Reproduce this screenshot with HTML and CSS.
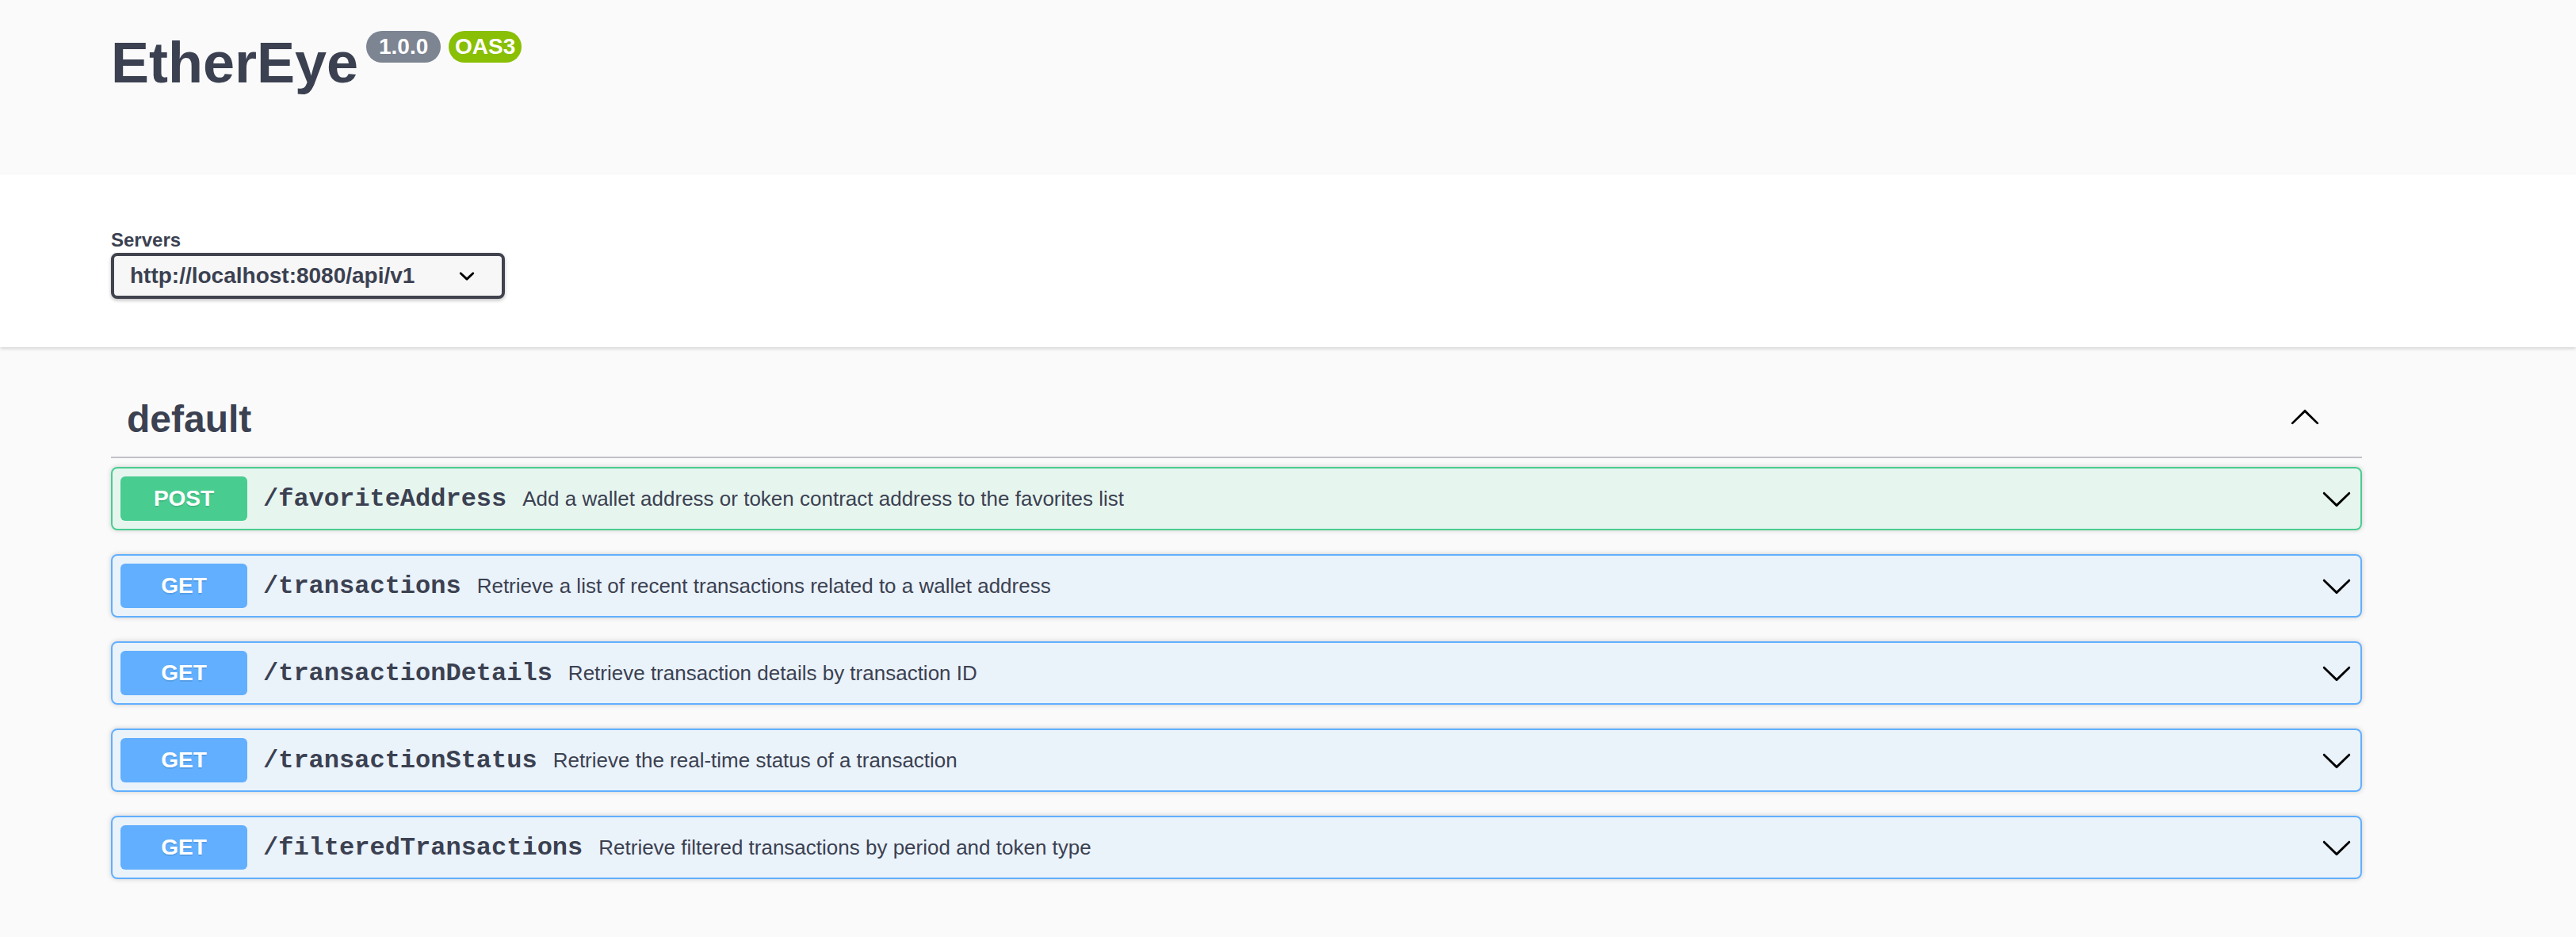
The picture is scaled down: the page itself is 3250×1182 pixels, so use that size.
FILE: index.html
```html
<!DOCTYPE html>
<html lang="en">
<head>
<meta charset="utf-8">
<title>EtherEye</title>
<link rel="stylesheet" href="styles.css">
</head>
<body>
<section class="info">
  <div class="wrapper">
    <div class="title-row">
      <h2 class="title">EtherEye</h2>
      <span class="badge badge-version">1.0.0</span>
      <span class="badge badge-oas">OAS3</span>
    </div>
  </div>
</section>

<section class="schemes">
  <div class="wrapper">
    <div class="servers-label">Servers</div>
    <div class="select">
      <span class="select-text">http://localhost:8080/api/v1</span>
      <svg class="select-arrow" viewBox="0 0 20 20" width="40" height="40"><path d="M13.418 7.859a.695.695 0 01.978 0 .68.68 0 010 .969l-3.908 3.83a.697.697 0 01-.979 0l-3.908-3.83a.68.68 0 010-.969.695.695 0 01.978 0L10 11l3.418-3.141z"/></svg>
    </div>
  </div>
</section>

<main class="wrapper ops">
  <div class="tag">
    <h3 class="tag-name">default</h3>
    <svg class="tag-arrow" viewBox="0 0 20 20" width="40" height="40"><path d="M17.418 14.908c.272.268.709.268.979 0s.271-.701 0-.969l-7.908-7.83c-.27-.268-.707-.268-.979 0l-7.908 7.83c-.27.268-.27.701 0 .969.271.268.709.268.979 0L10 7.767l7.418 7.141z"/></svg>
  </div>

  <div class="opblock opblock-post">
    <span class="method method-post">POST</span>
    <span class="path">/favoriteAddress</span>
    <span class="desc">Add a wallet address or token contract address to the favorites list</span>
    <svg class="op-arrow" viewBox="0 0 20 20" width="40" height="40"><path d="M17.418 6.109c.272-.268.709-.268.979 0s.271.701 0 .969l-7.908 7.83c-.27.268-.707.268-.979 0l-7.908-7.83c-.27-.268-.27-.701 0-.969.271-.268.709-.268.979 0L10 13.25l7.418-7.141z"/></svg>
  </div>

  <div class="opblock opblock-get">
    <span class="method method-get">GET</span>
    <span class="path">/transactions</span>
    <span class="desc">Retrieve a list of recent transactions related to a wallet address</span>
    <svg class="op-arrow" viewBox="0 0 20 20" width="40" height="40"><path d="M17.418 6.109c.272-.268.709-.268.979 0s.271.701 0 .969l-7.908 7.83c-.27.268-.707.268-.979 0l-7.908-7.830c-.27-.268-.27-.701 0-.969.271-.268.709-.268.979 0L10 13.25l7.418-7.141z"/></svg>
  </div>

  <div class="opblock opblock-get">
    <span class="method method-get">GET</span>
    <span class="path">/transactionDetails</span>
    <span class="desc">Retrieve transaction details by transaction ID</span>
    <svg class="op-arrow" viewBox="0 0 20 20" width="40" height="40"><path d="M17.418 6.109c.272-.268.709-.268.979 0s.271.701 0 .969l-7.908 7.83c-.27.268-.707.268-.979 0l-7.908-7.83c-.27-.268-.27-.701 0-.969.271-.268.709-.268.979 0L10 13.25l7.418-7.141z"/></svg>
  </div>

  <div class="opblock opblock-get">
    <span class="method method-get">GET</span>
    <span class="path">/transactionStatus</span>
    <span class="desc">Retrieve the real-time status of a transaction</span>
    <svg class="op-arrow" viewBox="0 0 20 20" width="40" height="40"><path d="M17.418 6.109c.272-.268.709-.268.979 0s.271.701 0 .969l-7.908 7.83c-.27.268-.707.268-.979 0l-7.908-7.83c-.27-.268-.27-.701 0-.969.271-.268.709-.268.979 0L10 13.25l7.418-7.141z"/></svg>
  </div>

  <div class="opblock opblock-get">
    <span class="method method-get">GET</span>
    <span class="path">/filteredTransactions</span>
    <span class="desc">Retrieve filtered transactions by period and token type</span>
    <svg class="op-arrow" viewBox="0 0 20 20" width="40" height="40"><path d="M17.418 6.109c.272-.268.709-.268.979 0s.271.701 0 .969l-7.908 7.83c-.27.268-.707.268-.979 0l-7.908-7.83c-.27-.268-.27-.701 0-.969.271-.268.709-.268.979 0L10 13.25l7.418-7.141z"/></svg>
  </div>
</main>
</body>
</html>
```

FILE: styles.css
```css
* { box-sizing: border-box; }

html, body {
  margin: 0;
  padding: 0;
  background: #fafafa;
  font-family: "Liberation Sans", Arial, sans-serif;
  color: #3b4151;
}

.wrapper {
  width: 2920px;
  margin-left: 100px;
  padding: 0 40px;
}

/* ---------- info ---------- */
.info {
  background: #fafafa;
  height: 220px;
  padding-top: 38px;
}

.title-row {
  display: flex;
  align-items: flex-start;
}

.title {
  margin: 0;
  font-size: 72px;
  line-height: 82px;
  font-weight: 700;
  color: #3b4151;
}

.badge {
  display: flex;
  align-items: center;
  justify-content: center;
  height: 40px;
  margin-top: 1px;
  padding: 0 12px;
  border-radius: 114px;
  color: #fff;
  font-size: 28px;
  font-weight: 700;
}

.badge-version {
  margin-left: 10px;
  width: 94px;
  background: #7d8492;
}

.badge-oas {
  margin-left: 10px;
  width: 92px;
  background: #89bf04;
}

/* ---------- schemes ---------- */
.schemes {
  background: #fff;
  height: 218px;
  padding-top: 69px;
  box-shadow: 0 2px 4px 0 rgba(0, 0, 0, 0.15);
  position: relative;
}

.servers-label {
  font-size: 24px;
  line-height: 28px;
  font-weight: 700;
  color: #3b4151;
  margin-bottom: 2px;
}

.select {
  display: flex;
  align-items: center;
  width: 497px;
  height: 58px;
  padding: 0 24px 0 20px;
  border: 4px solid #41444e;
  border-radius: 8px;
  background: #f7f7f7;
  box-shadow: 0 2px 4px 0 rgba(0, 0, 0, 0.25);
}

.select-text {
  flex: 1;
  font-size: 28px;
  font-weight: 700;
  color: #3b4151;
  white-space: nowrap;
}

.select-arrow {
  flex: none;
  fill: #000;
}

/* ---------- operations ---------- */
.ops {
  padding-top: 43px;
}

.tag {
  display: flex;
  align-items: center;
  padding: 20px 52px 20px 20px;
  border-bottom: 2px solid rgba(59, 65, 81, 0.3);
  margin-bottom: 11px;
}

.tag-name {
  flex: 1;
  margin: 0;
  font-size: 48px;
  line-height: 55px;
  font-weight: 700;
  color: #3b4151;
}

.tag-arrow {
  flex: none;
  fill: #000;
  position: relative;
  top: -4px;
}

.opblock {
  display: flex;
  align-items: center;
  height: 80px;
  padding: 0 10px;
  margin-bottom: 30px;
  border: 2px solid;
  border-radius: 8px;
  box-shadow: 0 0 6px rgba(0, 0, 0, 0.19);
}

.opblock-post {
  border-color: #49cc90;
  background: rgba(73, 204, 144, 0.1);
}

.opblock-get {
  border-color: #61affe;
  background: rgba(97, 175, 254, 0.1);
}

.method {
  flex: none;
  display: flex;
  align-items: center;
  justify-content: center;
  width: 160px;
  height: 56px;
  border-radius: 6px;
  color: #fff;
  font-size: 28px;
  font-weight: 700;
  text-shadow: 0 2px 0 rgba(0, 0, 0, 0.1);
}

.method-post { background: #49cc90; }
.method-get { background: #61affe; }

.path {
  flex: none;
  padding: 0 20px;
  font-family: "Liberation Mono", "Courier New", monospace;
  font-size: 32px;
  font-weight: 700;
  color: #3b4151;
}

.desc {
  flex: 1;
  font-size: 26px;
  color: #3b4151;
}

.op-arrow {
  flex: none;
  fill: #000;
}
```
